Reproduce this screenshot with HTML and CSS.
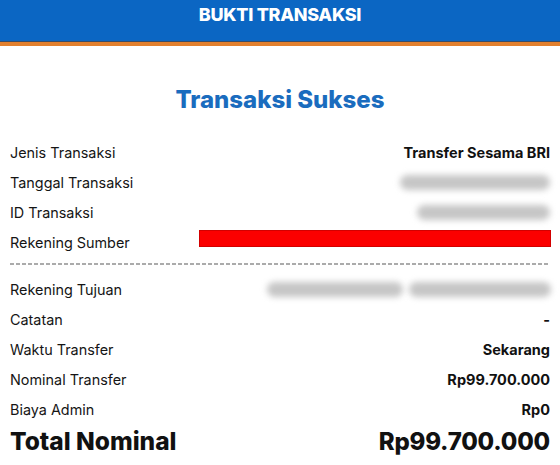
FILE: index.html
```html
<!DOCTYPE html>
<html lang="id">
<head>
  <meta charset="UTF-8" />
  <meta name="viewport" content="width=device-width, initial-scale=1" />
  <title>Bukti Transaksi</title>
  <link rel="stylesheet" href="styles.css">
</head>
<body>
  <header class="topbar">
    <h1>BUKTI TRANSAKSI</h1>
  </header>
  <div class="stripe"></div>

  <main class="receipt">
    <h2 class="status">Transaksi Sukses</h2>

    <div class="rows">
      <div class="row">
        <span class="label">Jenis Transaksi</span>
        <span class="value">Transfer Sesama BRI</span>
      </div>
      <div class="row">
        <span class="label">Tanggal Transaksi</span>
        <span class="blur" style="width: 150px"></span>
      </div>
      <div class="row">
        <span class="label">ID Transaksi</span>
        <span class="blur" style="width: 133px"></span>
      </div>
      <div class="row">
        <span class="label">Rekening Sumber</span>
        <span class="redact"></span>
      </div>
    </div>

    <div class="divider"></div>

    <div class="rows">
      <div class="row">
        <span class="label">Rekening Tujuan</span>
        <span class="blur-group">
          <span class="blur" style="width: 136px"></span>
          <span class="blur" style="width: 142px"></span>
        </span>
      </div>
      <div class="row">
        <span class="label">Catatan</span>
        <span class="value">-</span>
      </div>
      <div class="row">
        <span class="label">Waktu Transfer</span>
        <span class="value">Sekarang</span>
      </div>
      <div class="row">
        <span class="label">Nominal Transfer</span>
        <span class="value">Rp99.700.000</span>
      </div>
      <div class="row">
        <span class="label">Biaya Admin</span>
        <span class="value">Rp0</span>
      </div>
      <div class="row total">
        <span class="label">Total Nominal</span>
        <span class="value">Rp99.700.000</span>
      </div>
    </div>
  </main>
</body>
</html>
```

FILE: styles.css
```css
* {
  box-sizing: border-box;
  margin: 0;
  padding: 0;
  font-family: 'Inter', 'Noto Sans', sans-serif;
}

body {
  background: #fff;
  color: #1c1c1c;
  width: 560px;
  height: 465px;
  overflow: hidden;
}

.topbar {
  background-color: #0b66c3;
  height: 42px;
  display: flex;
  justify-content: center;
  align-items: center;
  border-bottom: 1px solid #3b4d66;
}

.topbar h1 {
  color: #fff;
  font-size: 18px;
  font-weight: 800;
  letter-spacing: -0.3px;
  margin-top: -12px;
}

.stripe {
  height: 4px;
  background-color: #e2802e;
}

.receipt {
  padding: 0 10px;
}

.status {
  text-align: center;
  color: #1a6cbe;
  font-size: 24px;
  font-weight: 800;
  line-height: 28px;
  padding: 40px 0 23px;
}

.row {
  display: flex;
  justify-content: space-between;
  align-items: center;
  height: 30px;
  font-size: 14.4px;
}

.label {
  color: #151515;
}

.value {
  font-size: 14.5px;
  font-weight: 700;
  color: #111;
}

.blur {
  display: inline-block;
  height: 15px;
  border-radius: 8px;
  background: #c6c6c6;
  filter: blur(3px);
}

.blur-group {
  display: flex;
  gap: 6px;
  margin-right: -1px;
}

.redact {
  width: 352px;
  height: 17px;
  margin-bottom: 8px;
  margin-right: -1px;
  background: #fb0000;
  border: 1px solid #d20000;
}

.divider {
  height: 2px;
  margin: 6px 0 9px;
  background: repeating-linear-gradient(90deg, #ababab 0 4px, transparent 4px 6px);
}

.row.total {
  height: 34px;
}

.row.total .label,
.row.total .value {
  font-size: 24.5px;
  font-weight: 800;
  color: #111;
}

.row.total .value {
  font-size: 24px;
  letter-spacing: -0.2px;
}
```
